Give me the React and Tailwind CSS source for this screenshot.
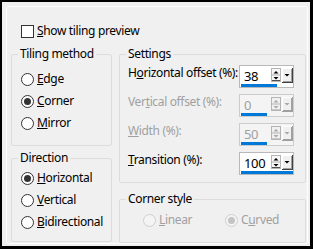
import React from "react";

const font = { fontFamily: '"Noto Sans", "Liberation Sans", sans-serif' };

function Radio({ checked, disabled, children }) {
    return (
        <div className="flex items-center h-[22px]">
            <span className={`w-[13px] h-[13px] rounded-full border flex items-center justify-center ${disabled ? "border-[#cfcfcf] bg-[#f4f4f4]" : "border-[#333333] bg-white"}`}>
                {checked && (
                    <span className={`w-[7px] h-[7px] rounded-full ${disabled ? "bg-[#c4c4c4]" : "bg-[#333333]"}`}></span>
                )}
            </span>
            <span className={`ml-[3px] ${disabled ? "text-[#a0a0a0]" : "text-black"}`}>{children}</span>
        </div>
    );
}

function Spin({ disabled }) {
    const arrow = disabled ? "#a8a8a8" : "#000000";
    return (
        <svg width="10" height="14" viewBox="0 0 10 14" className="block">
            <rect x="0.5" y="0.5" width="9" height="13" fill={disabled ? "#f0f0f0" : "#f7f7f7"} stroke="#b4b4b4" />
            <line x1="0.5" y1="7" x2="9.5" y2="7" stroke="#b4b4b4" />
            <polygon points="2.5,5.5 7.5,5.5 5,3" fill={arrow} />
            <polygon points="2.5,9 7.5,9 5,11.5" fill={arrow} />
            <line x1="1" y1="12.5" x2="9" y2="12.5" stroke={disabled ? "#c8c8c8" : "#505050"} />
        </svg>
    );
}

function Drop({ disabled }) {
    return (
        <svg width="11" height="15" viewBox="0 0 11 15" className="block">
            <rect x="0" y="0" width="11" height="15" fill="#f0f0f0" />
            <line x1="0.5" y1="0" x2="0.5" y2="14" stroke="#ffffff" />
            <line x1="0" y1="0.5" x2="10" y2="0.5" stroke="#ffffff" />
            <line x1="10.5" y1="0" x2="10.5" y2="15" stroke={disabled ? "#a0a0a0" : "#404040"} />
            <line x1="0" y1="14.5" x2="11" y2="14.5" stroke={disabled ? "#a0a0a0" : "#404040"} />
            <line x1="9.5" y1="1" x2="9.5" y2="14" stroke="#a0a0a0" />
            <line x1="1" y1="13.5" x2="10" y2="13.5" stroke="#a0a0a0" />
            <polygon points="2.5,6 7.5,6 5,8.5" fill={disabled ? "#a8a8a8" : "#000000"} />
        </svg>
    );
}

function NumberField({ value, bar, disabled }) {
    return (
        <div className={`w-[55px] h-[23px] shrink-0 border flex flex-col ${disabled ? "border-[#cccccc] bg-[#f4f4f4]" : "border-[#b9b9b9] bg-white"}`}>
            <div className="flex h-[18px] items-start pt-[2px]">
                <span className={`flex-1 pl-[4px] pt-[1px] leading-[15px] text-[13px] ${disabled ? "text-[#a0a0a0]" : "text-black"}`}>{value}</span>
                <Spin disabled={disabled} />
                <div className="ml-[1px]">
                    <Drop disabled={disabled} />
                </div>
            </div>
            <div className={`h-[3px] ml-[1px] bg-[#0078d7] ${bar}`}></div>
        </div>
    );
}

function SettingRow({ label, value, bar, disabled }) {
    return (
        <div className="flex items-start justify-between h-[23px]">
            <span className={`leading-[16px] whitespace-nowrap ${disabled ? "text-[#a0a0a0]" : "text-black"}`}>{label}</span>
            <NumberField value={value} bar={bar} disabled={disabled} />
        </div>
    );
}

export default function App() {
    return (
        <div className="w-[313px] h-[249px] bg-[#f0f0f0] border-black border-t-2 border-l-2 border-r-[3px] border-b-[3px] pt-[4px] pl-[4px] pr-[2px] pb-[2px] text-[12px] leading-[16px] tracking-[-0.35px] whitespace-nowrap" style={font}>
            <div className="h-full border border-[#fdfdfd] rounded-[2px] pl-[4px] pt-[16px]">
                {/* checkbox */}
                <div className="flex items-center h-[16px] ml-[10px]">
                    <span className="w-[13px] h-[13px] border border-[#333333] bg-white"></span>
                    <span className="ml-[3px]"><u>S</u>how tiling preview</span>
                </div>

                <div className="flex gap-[7px] mt-[7px]">
                    {/* left column */}
                    <div className="w-[101px] flex flex-col gap-[4px]">
                        <fieldset className="h-[100px] border border-[#dcdcdc] rounded-[2px] pl-[9px]">
                            <legend className="ml-[-3px] px-[2px] leading-[16px]">Tiling method</legend>
                            <div className="pt-[6px]">
                                <Radio><u>E</u>dge</Radio>
                                <Radio checked><u>C</u>orner</Radio>
                                <Radio><u>M</u>irror</Radio>
                            </div>
                        </fieldset>
                        <fieldset className="h-[92px] border border-[#dcdcdc] rounded-[2px] pl-[9px]">
                            <legend className="ml-[-3px] px-[2px] leading-[16px]">Direction</legend>
                            <div className="pt-[1px]">
                                <Radio checked><u>H</u>orizontal</Radio>
                                <Radio><u>V</u>ertical</Radio>
                                <Radio><u>B</u>idirectional</Radio>
                            </div>
                        </fieldset>
                    </div>

                    {/* right column */}
                    <div className="w-[187px] flex flex-col gap-[8px]">
                        <fieldset className="h-[137px] border border-[#dcdcdc] rounded-[2px] pl-[8px] pr-[11px]">
                            <legend className="ml-[-2px] px-[2px] leading-[16px]">Settings</legend>
                            <div className="pt-[3px] flex flex-col gap-[6px]">
                                <SettingRow label={<>H<u>o</u>rizontal offset (%):</>} value="38" bar="w-[36px]" />
                                <SettingRow label={<>Ver<u>t</u>ical offset (%):</>} value="0" bar="w-[26px]" disabled />
                                <SettingRow label={<><u>W</u>idth (%):</>} value="50" bar="w-[26px]" disabled />
                                <SettingRow label={<><u>T</u>ransition (%):</>} value="100" bar="w-[52px]" />
                            </div>
                        </fieldset>
                        <fieldset className="h-[52px] border border-[#dcdcdc] rounded-[2px] pl-[23px]">
                            <legend className="ml-[-17px] px-[2px] leading-[16px]">Corner style</legend>
                            <div className="pt-[2px] flex">
                                <div className="w-[82px]">
                                    <Radio disabled><u>L</u>inear</Radio>
                                </div>
                                <Radio checked disabled>C<u>u</u>rved</Radio>
                            </div>
                        </fieldset>
                    </div>
                </div>
            </div>
        </div>
    );
}
